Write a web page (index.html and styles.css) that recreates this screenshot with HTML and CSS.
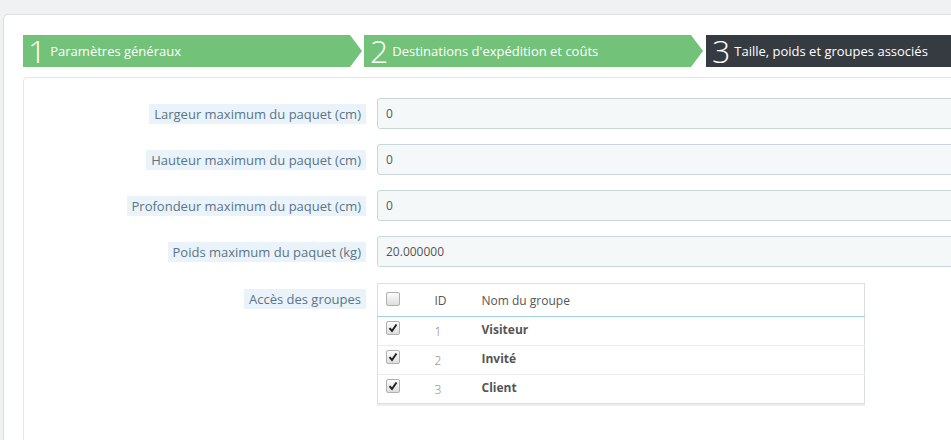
FILE: index.html
```html
<!DOCTYPE html>
<html>
  <head>
    <meta charset="UTF-8">
    <title>Transporteur - Taille, poids et groupes associés</title>
    <link rel="stylesheet" href="styles.css">
  </head>
  <body>
    <div id="page">
      <div class="panel">
        <div class="steps">
          <div class="step step-done step-1"><span class="num">1</span><span class="title">Paramètres généraux</span></div>
          <div class="step step-done step-2"><span class="num">2</span><span class="title">Destinations d'expédition et coûts</span></div>
          <div class="step step-current step-3"><span class="num">3</span><span class="title">Taille, poids et groupes associés</span></div>
        </div>

        <div class="form-panel">
          <div class="form-row">
            <div class="control-label"><span class="label-tooltip">Largeur maximum du paquet (cm)</span></div>
            <input class="field" type="text" value="0">
          </div>
          <div class="form-row">
            <div class="control-label"><span class="label-tooltip">Hauteur maximum du paquet (cm)</span></div>
            <input class="field" type="text" value="0">
          </div>
          <div class="form-row">
            <div class="control-label"><span class="label-tooltip">Profondeur maximum du paquet (cm)</span></div>
            <input class="field" type="text" value="0">
          </div>
          <div class="form-row">
            <div class="control-label"><span class="label-tooltip">Poids maximum du paquet (kg)</span></div>
            <input class="field" type="text" value="20.000000">
          </div>
          <div class="form-row form-row-top">
            <div class="control-label"><span class="label-tooltip">Accès des groupes</span></div>
            <table class="groups">
              <thead>
                <tr>
                  <th class="col-check"><span class="check"></span></th>
                  <th class="col-id">ID</th>
                  <th class="col-name">Nom du groupe</th>
                </tr>
              </thead>
              <tbody>
                <tr>
                  <td class="col-check"><span class="check checked"><svg viewBox="0 0 12 12"><path d="M2.5 6.2 L5 9 L9.5 2.5" fill="none" stroke="#222" stroke-width="2"/></svg></span></td>
                  <td class="col-id">1</td>
                  <td class="col-name">Visiteur</td>
                </tr>
                <tr>
                  <td class="col-check"><span class="check checked"><svg viewBox="0 0 12 12"><path d="M2.5 6.2 L5 9 L9.5 2.5" fill="none" stroke="#222" stroke-width="2"/></svg></span></td>
                  <td class="col-id">2</td>
                  <td class="col-name">Invité</td>
                </tr>
                <tr>
                  <td class="col-check"><span class="check checked"><svg viewBox="0 0 12 12"><path d="M2.5 6.2 L5 9 L9.5 2.5" fill="none" stroke="#222" stroke-width="2"/></svg></span></td>
                  <td class="col-id">3</td>
                  <td class="col-name">Client</td>
                </tr>
              </tbody>
            </table>
          </div>
        </div>
      </div>
    </div>
  </body>
</html>
```

FILE: styles.css
```css
html,
body {
  margin: 0;
  padding: 0;
  height: 100%;
  overflow: hidden;
  background-color: #eff1f2;
  color: #555;
  font-family: "Open Sans", "Noto Sans", sans-serif;
  font-size: 12px;
}

#page {
  padding: 14px 0 0 3px;
}

.panel {
  width: 1200px;
  min-height: 600px;
  background-color: #fff;
  border: 1px solid #dcdfe2;
  border-radius: 5px;
  padding: 20px 0 0 19px;
}

.steps {
  display: flex;
  height: 32px;
  margin-bottom: 10px;
}

.step {
  position: relative;
  display: flex;
  align-items: center;
  height: 32px;
  color: #fff;
  box-sizing: border-box;
}

.step .num {
  font-size: 32px;
  font-weight: 300;
  line-height: 32px;
  margin-right: 4px;
}

.step .title {
  font-size: 13px;
  line-height: 32px;
}

.step-done {
  background-color: #72c279;
}

.step-done::after {
  content: "";
  position: absolute;
  left: 100%;
  top: 0;
  border-left: 12px solid #72c279;
  border-top: 16px solid transparent;
  border-bottom: 16px solid transparent;
}

.step-1 {
  width: 327px;
  margin-right: 14px;
  padding-left: 5px;
}

.step-2 {
  width: 327px;
  margin-right: 15px;
  padding-left: 6px;
}

.step-3 {
  width: 400px;
  padding-left: 6px;
  background-color: #363a41;
}

.form-panel {
  border: 1px solid #e4e6e8;
  border-radius: 4px;
  padding-top: 20px;
  min-height: 500px;
}

.form-row {
  display: flex;
  align-items: center;
  margin-bottom: 15px;
}

.form-row-top {
  align-items: flex-start;
  margin-top: 16px;
}

.control-label {
  width: 342px;
  margin-right: 11px;
  text-align: right;
}

.form-row-top .control-label {
  margin-top: 6px;
}

.label-tooltip {
  display: inline-block;
  padding: 0 5px;
  line-height: 20px;
  font-size: 13px;
  color: #5c7488;
  background-color: #e9f3f9;
}

.field {
  width: 700px;
  height: 31px;
  box-sizing: border-box;
  padding: 0 8px;
  border: 1px solid #c7d6db;
  border-radius: 3px;
  background-color: #f5f8f9;
  color: #555;
  font-family: "Open Sans", "Noto Sans", sans-serif;
  font-size: 12px;
}

.groups {
  width: 488px;
  border-collapse: collapse;
  border: 1px solid #dcdfe2;
  box-shadow: 0 2px 0 #eceeef;
}

.groups th {
  height: 32px;
  text-align: left;
  font-weight: 400;
  color: #555;
  border-bottom: 1px solid #a0cfe8;
  padding: 0;
}

.groups td {
  height: 29px;
  padding: 0 0 4px;
  box-sizing: border-box;
  border-top: 1px solid #eaedef;
}

.groups thead + tbody tr:first-child td {
  border-top: none;
}

.col-check {
  width: 46px;
  padding-left: 8px !important;
  box-sizing: border-box;
}

.col-id {
  width: 58px;
  padding-left: 11px !important;
  box-sizing: border-box;
}

td.col-id {
  color: #808080;
  font-weight: 300;
  padding-top: 5px !important;
}

td.col-name {
  font-weight: 700;
  color: #555;
}

.check {
  display: block;
  width: 12px;
  height: 12px;
  border: 1px solid #b0b0b0;
  border-radius: 2px;
  background: linear-gradient(#fcfcfc, #dedede);
  margin-top: -2px;
}

.check svg {
  display: block;
  width: 12px;
  height: 12px;
}
```
